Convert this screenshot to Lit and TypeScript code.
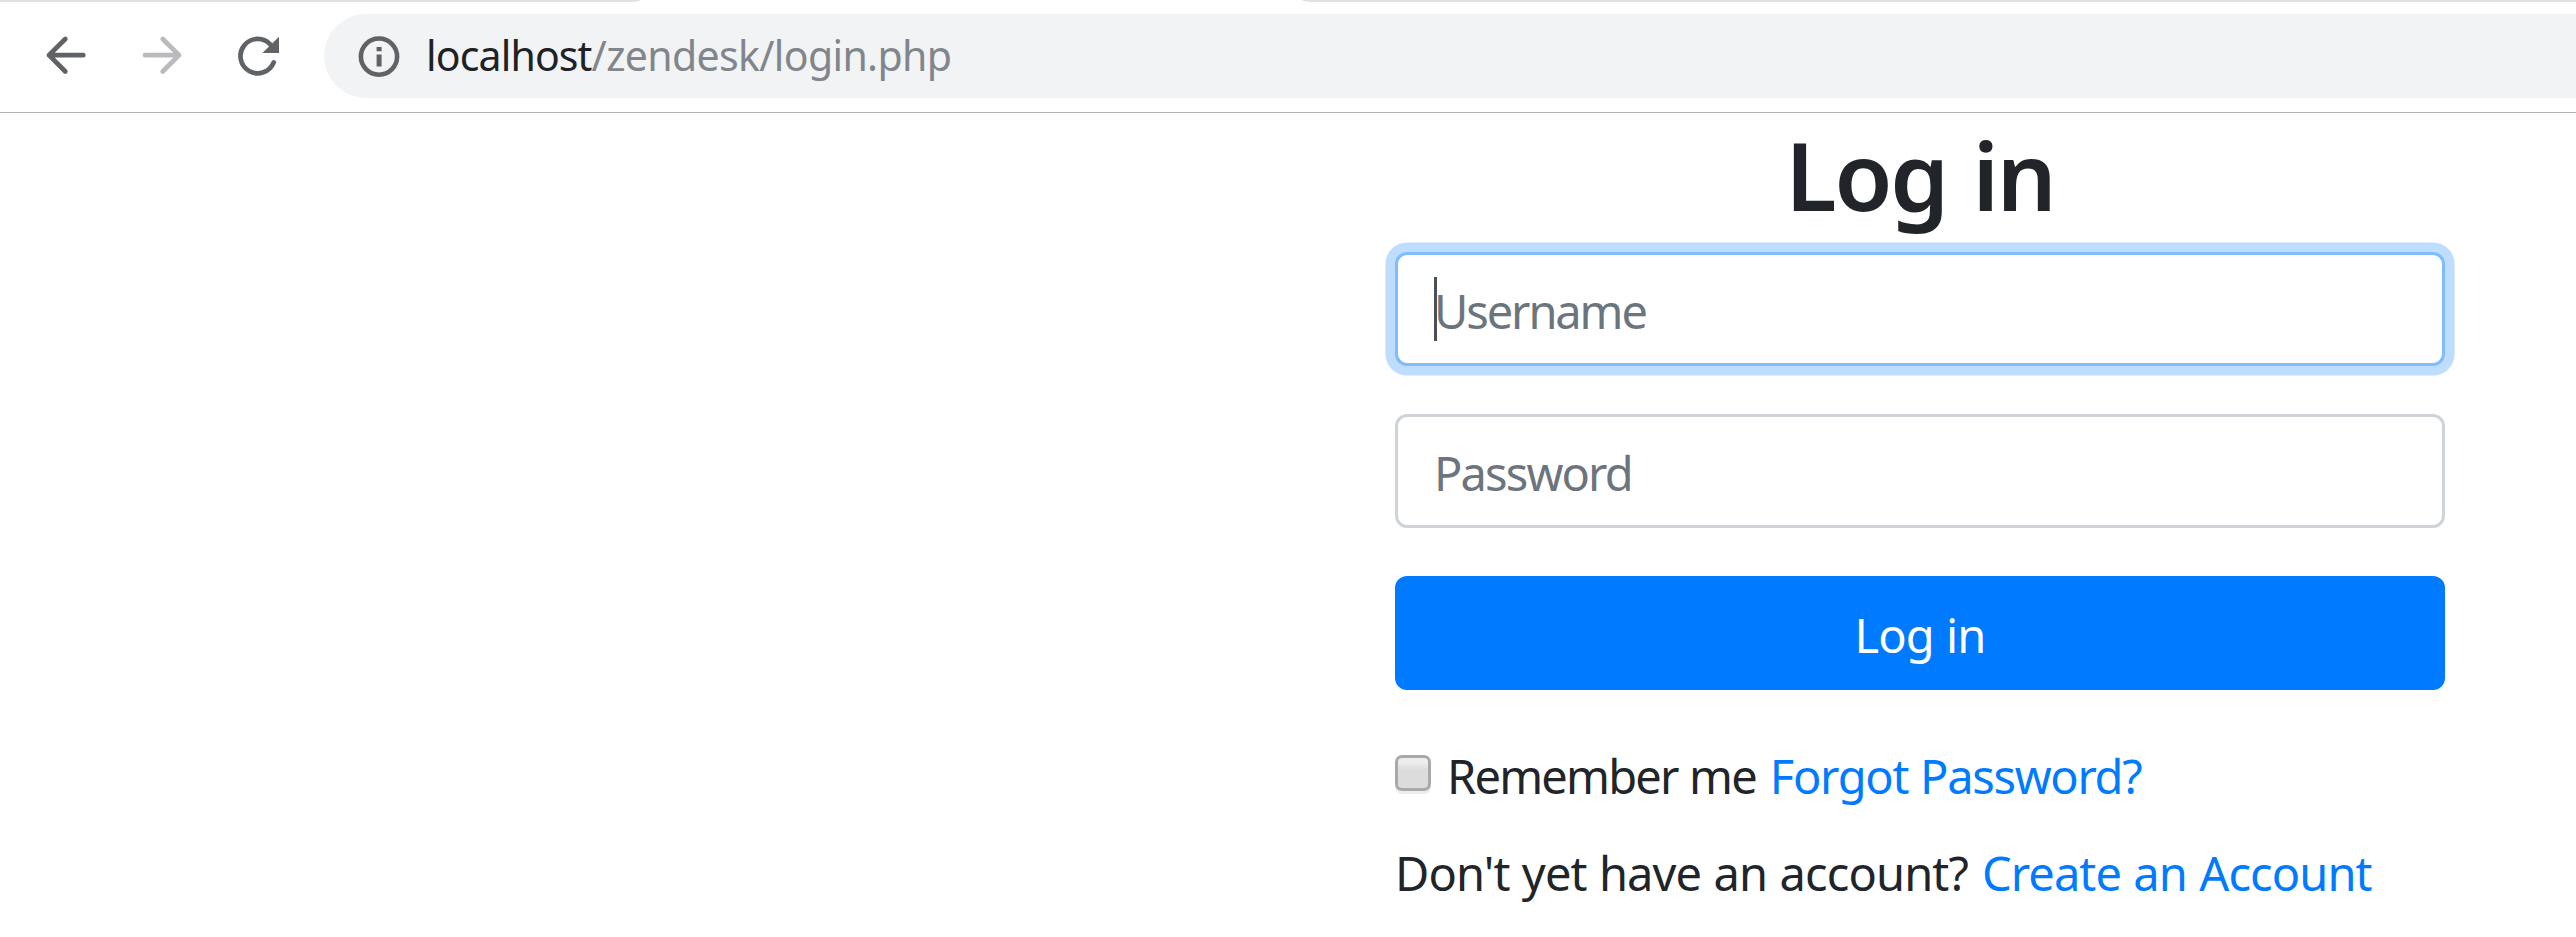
import { LitElement, html, css } from "lit";
import { customElement } from "lit/decorators.js";

@customElement("browser-toolbar")
class BrowserToolbar extends LitElement {
  static styles = css`
    :host { display: block; height: 113px; box-sizing: border-box; background: #fff; border-bottom: 1px solid #b1b1b3; }
    .tabs { display: flex; justify-content: space-between; height: 2px; }
    .strip { background: #dee1e6; }
    .before { width: 640px; border-bottom-right-radius: 12px 2px; }
    .after { width: 1274px; border-bottom-left-radius: 12px 2px; }
    .bar { display: flex; padding-top: 12px; }
    .nav { display: block; width: 324px; height: 84px; flex: none; }
    .address { flex: 1; display: flex; align-items: center; height: 84px; background: #f1f3f4; border-radius: 42px 0 0 42px; }
    .info { display: block; width: 42px; height: 42px; margin-left: 33.5px; }
    .url { margin-left: 26.5px; padding-bottom: 2px; font-size: 41px; line-height: 56px; white-space: nowrap; color: #80868b; letter-spacing: -0.65px; }
    .host { color: #202124; letter-spacing: -0.85px; }
  `;
  render() {
    return html`
      <div class="tabs"><div class="strip before"></div><div class="strip after"></div></div>
      <div class="bar">
        <svg class="nav" viewBox="0 14 324 84" fill="none" stroke="#5f6368" stroke-width="4.7" stroke-linecap="round" stroke-linejoin="round">
          <path d="M83.3 55.2H49M65.3 39L49 55.2L65.3 71.5" />
          <path stroke="#babbbe" d="M145 55.2H179M162.7 39L179 55.2L162.7 71.5" />
          <path d="M273.7 62.4A17.2 17.2 0 1 1 270.2 44.3" />
          <path fill="#5f6368" stroke="none" d="M279 36.8V53H262.4Z" />
        </svg>
        <div class="address">
          <svg class="info" viewBox="0 0 42 42">
            <circle cx="21" cy="21.6" r="18.1" fill="none" stroke="#5f6368" stroke-width="4.6" />
            <path fill="#5f6368" d="M18.6 12h5v4.3h-5zM18.6 19.5h5v12h-5z" />
          </svg>
          <div class="url"><span class="host">localhost</span>/zendesk/login.php</div>
        </div>
      </div>
    `;
  }
}

@customElement("login-form")
class LoginForm extends LitElement {
  static styles = css`
    :host { display: flex; flex-direction: column; width: 1050px; margin-left: 1395px; font-size: 47px; line-height: 72px; color: #212529; }
    .title { margin: 5px 0 19px; font-size: 94px; font-weight: 600; line-height: 115px; text-align: center; letter-spacing: -2.4px; word-spacing: 4px; }
    .field { position: relative; margin-bottom: 48px; }
    input.text { display: block; box-sizing: border-box; width: 100%; height: 114px; padding: 4px 36px 0; border: 3px solid #ced4da; border-radius: 12px; outline: none; background: #fff; font: inherit; line-height: 72px; color: #495057; }
    input.text::placeholder { color: #6c757d; opacity: 1; }
    .user { letter-spacing: -2.1px; }
    .pass { letter-spacing: -1.85px; }
    input.active { border-color: #80bdff; box-shadow: 0 0 0 9.6px rgba(0, 123, 255, 0.25); }
    .caret { position: absolute; left: 39px; top: 25px; width: 3px; height: 64px; background: #495057; }
    .submit { height: 114px; padding: 4px 0 0; border: 0; border-radius: 12px; background: #007bff; color: #fff; font: inherit; line-height: 72px; letter-spacing: -0.9px; word-spacing: 1px; }
    .row { display: flex; white-space: nowrap; }
    .remember { margin-top: 50px; letter-spacing: -1.8px; word-spacing: 1px; }
    .signup { margin-top: 25px; letter-spacing: -0.88px; word-spacing: 1px; }
    .check { appearance: none; box-sizing: border-box; width: 36px; height: 36px; margin: 15px 16px 0 0; border: 3px solid #a9a9a9; border-radius: 7px; background: linear-gradient(#ededed 0, #ededed 15%, #dcdcdc 40%, #dcdcdc 100%); box-shadow: 0 3px 0 #ececec; }
    .link { color: #007bff; text-decoration: none; }
    .forgot { margin-left: 14px; letter-spacing: -1.3px; }
    .create { margin-left: 14px; letter-spacing: -0.9px; }
  `;
  render() {
    return html`
      <h1 class="title">Log in</h1>
      <div class="field">
        <input class="text user active" type="text" placeholder="Username" />
        <span class="caret"></span>
      </div>
      <div class="field"><input class="text pass" type="password" placeholder="Password" /></div>
      <button class="submit">Log in</button>
      <div class="row remember">
        <input class="check" type="checkbox" aria-label="Remember me" />
        <span>Remember me</span>
        <a class="link forgot" href="#">Forgot Password?</a>
      </div>
      <div class="row signup">
        <span>Don't yet have an account?</span>
        <a class="link create" href="#">Create an Account</a>
      </div>
    `;
  }
}

@customElement("app-root")
class AppRoot extends LitElement {
  static styles = css`
    :host { display: block; height: 937px; overflow: hidden; background: #fff; font-family: "Noto Sans", "Open Sans", sans-serif; }
  `;
  render() {
    return html`<browser-toolbar></browser-toolbar><login-form></login-form>`;
  }
}
